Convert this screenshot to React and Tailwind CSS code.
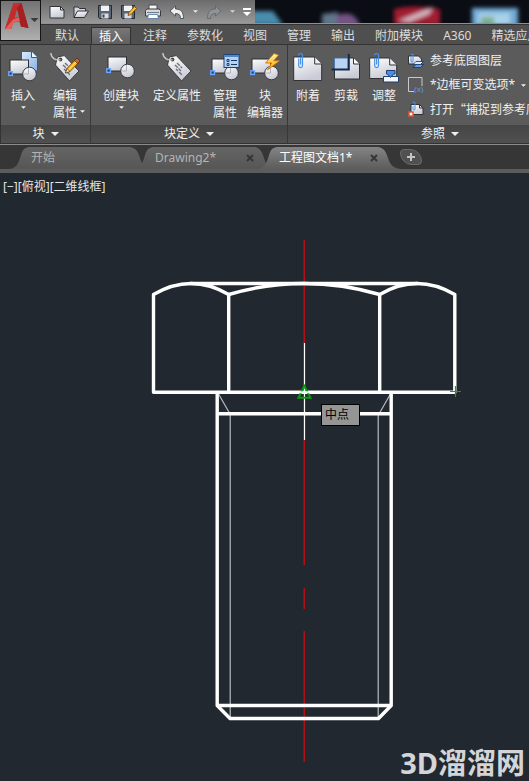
import clsx from "clsx"

const RIBBON_TABS = ["默认", "插入", "注释", "参数化", "视图", "管理", "输出", "附加模块", "A360", "精选应用"]

function Caret({ className }) {
  return (
    <svg viewBox="0 0 8 4" className={clsx("shrink-0 fill-current", className)} aria-hidden="true">
      <path d="M0 0h8L4 4z" />
    </svg>
  )
}

/* gradients shared by all the icons */
function IconDefs() {
  return (
    <svg className="absolute h-0 w-0" aria-hidden="true">
      <defs>
        <linearGradient id="paper" x1="0" y1="0" x2="0.4" y2="1">
          <stop offset="0" stopColor="#ffffff" />
          <stop offset="1" stopColor="#c9ccd6" />
        </linearGradient>
        <linearGradient id="sky" x1="0" y1="0" x2="1" y2="1">
          <stop offset="0" stopColor="#dcecff" />
          <stop offset="1" stopColor="#86b0e4" />
        </linearGradient>
        <linearGradient id="bolt" x1="0" y1="0" x2="0" y2="1">
          <stop offset="0" stopColor="#fff6a0" />
          <stop offset="1" stopColor="#ff9d00" />
        </linearGradient>
        <linearGradient id="red" x1="0" y1="0" x2="1" y2="1">
          <stop offset="0" stopColor="#d93836" />
          <stop offset="1" stopColor="#93171a" />
        </linearGradient>
      </defs>
    </svg>
  )
}

function Icon({ children }) {
  return (
    <svg viewBox="0 0 30 32" className="h-8 w-[30px]" fill="none" aria-hidden="true">
      {children}
    </svg>
  )
}

function BlockShape({ y = 0 }) {
  return (
    <g transform={`translate(0 ${y})`}>
      <rect x="2" y="8" width="18.500" height="14" fill="url(#paper)" stroke="#2b2e34" />
      <circle cx="21.500" cy="22" r="6.800" fill="url(#paper)" stroke="#3a3d44" />
      <path d="M16 22h4.500v-6" stroke="#a3a6ae" strokeWidth="0.800" />
      <rect x="0.800" y="19.800" width="3.600" height="3.600" fill="#20407a" stroke="#6ea8ff" strokeWidth="1.400" />
    </g>
  )
}

function InsertIcon() {
  return (
    <Icon>
      <path d="M13.500 0.500h10l6 6V20h-16z" fill="url(#sky)" stroke="#315a92" />
      <path d="M23.500 0.500v6h6" fill="#f1f7ff" stroke="#315a92" />
      <BlockShape y={1} />
    </Icon>
  )
}

function TagBody() {
  return (
    <>
      <path d="M5.500 14 7.300 6l7-1.400L29 20l-9.500 10z" fill="url(#paper)" stroke="#3a3a3a" />
      <path d="M13 14l6 6M15 12l5 5M17 21l3 3M14 18l2 2" stroke="#6d7078" strokeWidth="1.300" strokeDasharray="4 1" />
      <circle cx="10.400" cy="8.600" r="2" fill="#4b4b4b" />
      <path d="M0.800 2C1.500 8 6 9.500 10.400 8.600" stroke="#c9c9c9" strokeWidth="1.400" />
    </>
  )
}

function EditTagIcon() {
  return (
    <Icon>
      <TagBody />
      <path d="M15.500 22 17 17.500 25.500 8.500l3.200 3-8.700 9z" fill="#ffb319" stroke="#5a3a00" strokeWidth="0.800" />
      <path d="M18.500 19 27 10" stroke="#fff0a5" />
      <path d="M24.500 9.500 27 7l3 3-2.400 2.500z" fill="#c86a2d" stroke="#5a2a10" strokeWidth="0.800" />
      <path d="M15.500 22 17 17.500l3 3z" fill="#f5dfb5" stroke="#333" strokeWidth="0.600" />
    </Icon>
  )
}

function TagIcon() {
  return <Icon><TagBody /></Icon>
}

function CreateIcon() {
  return <Icon><BlockShape y={-2} /></Icon>
}

function ManageIcon() {
  return (
    <Icon>
      <BlockShape />
      <rect x="14" y="3.500" width="15" height="13" fill="#b6d2f3" stroke="#1f4373" />
      <path d="M14 5h15" stroke="#4f86c9" strokeWidth="2" />
      <path d="M17 8.500h2v2h-2zM17 12.500h2v2h-2z" stroke="#17365f" strokeWidth="0.900" />
      <path d="M21 9.500h6M21 13.500h6" stroke="#17365f" strokeWidth="1.200" />
    </Icon>
  )
}

function EditorIcon() {
  return (
    <Icon>
      <BlockShape />
      <path d="M24 2.500 15.500 12h6L17.500 19 29.500 9.800h-5.800L28.500 4z" fill="url(#bolt)" stroke="#d87400" strokeWidth="0.900" />
    </Icon>
  )
}

function Sheet() {
  return (
    <>
      <path d="M0.700 6h21l7 7v16.500h-28z" fill="url(#paper)" stroke="#303236" />
      <path d="M21.700 6v7h7" fill="#eceef2" stroke="#303236" />
    </>
  )
}

function ClipMark() {
  return (
    <path
      d="M5.700 7.500v7.300c0 2.400 3.800 2.400 3.800 0V4.300c0-2.400-4-2.400-4 0M7.600 13.500V7"
      stroke="#4a90e6"
      strokeWidth="1.200"
    />
  )
}

function AttachIcon() {
  return <Icon><Sheet /><ClipMark /></Icon>
}

function CropIcon() {
  return (
    <Icon>
      <path d="M3.500 7h19l6 6v15h-25z" fill="url(#paper)" stroke="#303236" />
      <path d="M22.500 7v6h6" fill="#fff" stroke="#303236" />
      <path d="M3.500 7H17v11.500H3.500z" fill="#b9d3f2" stroke="#4c78ae" />
      <path d="M0.500 18.500h17.300V3" stroke="#15294b" strokeWidth="2" />
    </Icon>
  )
}

function AdjustIcon() {
  return (
    <Icon>
      <path d="M0.700 7h20l7 7v13.500h-27z" fill="url(#paper)" stroke="#303236" />
      <path d="M20.700 7v7h7" fill="#eceef2" stroke="#303236" />
      <ClipMark />
      <path d="M14.500 25.500h15v5.500h-15z" fill="#f5f8fd" stroke="#1f3f70" />
      <path d="M17.500 19.500h8.500v3.500h-1.500l-3 3.500-3-3.500h-1z" fill="#4b8fe8" stroke="#1f3f70" />
    </Icon>
  )
}

function RibbonButton({ icon, lines, caret, sideCaret, className }) {
  return (
    <button type="button" className={clsx("flex flex-col items-center whitespace-nowrap", className)}>
      {icon}
      <span className="relative mt-1 leading-[17px]">
        {lines.map((line) => (
          <span key={line} className="block">{line}</span>
        ))}
        {sideCaret && <Caret className="absolute -right-2 bottom-2 h-[3px] w-[5px]" />}
      </span>
      {caret && <Caret className="mt-0.5 h-[3px] w-[5px]" />}
    </button>
  )
}

function Panel({ title, className, children }) {
  return (
    <section className={clsx("flex min-w-0 flex-col border-r border-[#383838] bg-[#5b5b5b]", className)}>
      <div className="flex h-20 pt-1.5">{children}</div>
      <button
        type="button"
        className="flex h-[18px] items-center justify-center gap-1.5 bg-linear-to-b from-[#454545] to-[#505050] leading-4"
      >
        {title}
        <Caret className="h-1 w-2" />
      </button>
    </section>
  )
}

function RefRow({ icon, text, caret, className }) {
  return (
    <button type="button" className={clsx("flex h-6 items-center gap-1.5 whitespace-nowrap", className)}>
      <svg viewBox="0 0 16 16" className="h-4 w-4 shrink-0" fill="none" aria-hidden="true">{icon}</svg>
      {text}
      {caret && <Caret className="h-[3px] w-[5px]" />}
    </button>
  )
}

const layerIcon = (
  <>
    <path d="M0.500 3h10l3 3v5h-13z" fill="url(#paper)" stroke="#303236" />
    <path d="M3 4v4c0 1.500 2 1.500 2 0V2c0-1.500-2-1.500-2 0" stroke="#4a90e6" />
    <path d="M5 14.500l3-3h7.500l-3 3z" fill="#5f9cec" stroke="#16335f" strokeWidth="0.800" />
    <path d="M5 11.500l3-3h7.500l-3 3z" fill="#dcebff" stroke="#16335f" strokeWidth="0.800" />
  </>
)

const frameIcon = (
  <>
    <path d="M6 14.500H0.500V0.500h13.500V9" stroke="#c8cacd" />
    <text x="6" y="15" fontSize="8" fill="#5b9cf5" fontFamily="Liberation Sans">(x)</text>
  </>
)

const snapIcon = (
  <>
    <path d="M3 3.500h8.500l3.500 3.500v6.500H3z" fill="url(#paper)" stroke="#303236" />
    <path d="M11.500 3.500V7H15" stroke="#303236" />
    <path d="M5 5v3c0 1.500 2 1.500 2 0V2c0-1.500-2-1.500-2 0" stroke="#4a90e6" />
    <rect x="1" y="11" width="4" height="4" fill="#fff" stroke="#e4572e" strokeWidth="1.500" />
  </>
)

function QuickIcon({ label, children }) {
  return (
    <button type="button" aria-label={label} className="shrink-0">
      <svg viewBox="0 0 16 16" className="h-4 w-4" fill="none" aria-hidden="true">{children}</svg>
    </button>
  )
}

function QuickAccess() {
  return (
    <div className="flex w-[214px] shrink-0 items-center gap-2 bg-linear-to-b from-[#6c6c6c] to-[#989898] pl-2 text-gray-200">
      <QuickIcon label="新建">
        <path d="M1 2.500h10.500l3.500 3.500v8H1z" fill="url(#paper)" stroke="#303236" />
        <path d="M11.500 2.500V6H15" stroke="#303236" />
      </QuickIcon>
      <QuickIcon label="打开">
        <path d="M1 13.500V3h4l1.500 1.500h6V7" fill="#d5d8dd" stroke="#303236" />
        <path d="M1 13.500 4.500 7H15.500l-4 6.500z" fill="url(#paper)" stroke="#303236" />
      </QuickIcon>
      <QuickIcon label="保存">
        <path d="M1.500 1.500h13v13h-12l-1-1z" fill="#5b6674" stroke="#252a31" />
        <path d="M4 1.500h8V7H4z" fill="#f2f3f5" />
        <path d="M4.500 9.500h7v5h-7z" fill="#d9dce0" />
        <path d="M5.500 10.500h2v3h-2z" fill="#39424e" />
      </QuickIcon>
      <QuickIcon label="另存为">
        <path d="M0.500 1.500h13v13h-12l-1-1z" fill="#5b6674" stroke="#252a31" />
        <path d="M3 1.500h8V7H3z" fill="#f2f3f5" />
        <path d="M3.500 9.500h7v5h-7z" fill="#d9dce0" />
        <path d="M7 11.500 8 8.500 13.500 2.500 15.500 4.500 10 10.500z" fill="#ffbf35" stroke="#6b4309" strokeWidth="0.800" />
      </QuickIcon>
      <QuickIcon label="打印">
        <path d="M4 1h8v5H4z" fill="#f5f6f8" stroke="#4a4d52" />
        <path d="M0.500 6.500 2 5h12l1.500 1.500v5.500h-15z" fill="#d4d7dc" stroke="#3a3d42" />
        <path d="M2 8.500h12" stroke="#777b82" />
        <path d="M3.500 10.500h9l1 4h-11z" fill="#fff" stroke="#4d76a8" strokeWidth="0.800" />
      </QuickIcon>
      <QuickIcon label="放弃">
        <path d="M1 7 6.500 2v3C12 5 14.500 8 14.500 14.500h-3C11.500 11 10 9.500 6.500 9.500V12z" fill="#eceef2" stroke="#3d4147" strokeWidth="0.800" />
      </QuickIcon>
      <Caret className="-mx-1 box-content h-[3px] w-[5px] px-1" />
      <QuickIcon label="重做">
        <path d="M15 7 9.500 2v3C4 5 1.500 8 1.500 14.500h3C4.500 11 6 9.500 9.500 9.500V12z" fill="#8f9296" stroke="#5f6266" strokeWidth="0.800" />
      </QuickIcon>
      <Caret className="-mx-1 box-content h-[3px] w-[5px] px-1 text-gray-300" />
      <button type="button" aria-label="自定义快速访问工具栏" className="flex flex-col items-center gap-0.5">
        <span className="h-0.5 w-2 bg-white" />
        <Caret className="h-1 w-2 text-white" />
      </button>
    </div>
  )
}

function DesktopStrip() {
  return (
    <svg viewBox="0 0 274 23" preserveAspectRatio="xMinYMin slice" className="h-[23px] min-w-0 flex-1 bg-[#0a0d13]" aria-hidden="true">
      <defs>
        <filter id="soft" x="-20%" y="-20%" width="140%" height="140%">
          <feGaussianBlur stdDeviation="2" />
        </filter>
      </defs>
      <g filter="url(#soft)">
        <path d="M-4 11h22l10 14H-4z" fill="#4a8cae" />
        <path d="M67 14l16-2v14H67z" fill="#60748a" />
        <path d="M82 15q18-6 23 11H82z" fill="#745385" />
        <path d="M139 9q20-5 46 0v16h-46z" fill="#a31c30" />
        <path d="M143 21 178 7l-4 7-20 8z" fill="#d8bcc9" />
        <path d="M217 8h46v18h-46z" fill="#73abd8" />
        <path d="M223 13h32v12h-32z" fill="#a9d2e8" />
        <path d="M226 17h13v8h-13z" fill="#7fae93" />
      </g>
    </svg>
  )
}

function Header() {
  return (
    <header className="flex bg-[#4f4f4f]">
      <button
        type="button"
        aria-label="应用程序菜单"
        className="z-10 flex h-[41px] w-[41px] shrink-0 items-center border border-[#151515] bg-linear-to-b from-[#737373] to-[#b0b0b0]"
      >
        <svg viewBox="0 0 39 39" className="h-[39px] w-[39px]" aria-hidden="true">
          <path d="M12.500 2h8l7 25-7.500-1.500-1.500-5-6.500 1L10 28H4z" fill="url(#red)" />
          <path d="M16 8l2.500 7.500-5 1.500z" fill="#7c7c7c" />
          <path d="M12.500 2 16 7 10 28H4z" fill="#c42c2c" />
          <path d="M4 28 12 18.500 18 16 19.500 20 12.500 21.500 10 28z" fill="#e2605b" />
          <path d="M20.500 2l7 25-7.500-1.500L16 7z" fill="#a52023" />
          <path d="M29.500 17h8L33.500 21z" fill="#343a42" />
        </svg>
      </button>
      <div className="flex min-w-0 flex-1 flex-col">
        <div className="flex h-6 border-b border-[#909090]">
          <QuickAccess />
          <DesktopStrip />
        </div>
        <nav className="flex h-5 gap-1 overflow-hidden border-t border-[#333] pl-1.5 pt-0.5 text-[#dcdcdc]">
          {RIBBON_TABS.map((tab) => (
            <button
              key={tab}
              type="button"
              className={clsx(
                "h-[18px] shrink-0 px-2 leading-4",
                tab === "插入" && "border border-b-0 border-[#303030] bg-linear-to-b from-[#777] to-[#5e5e5e] px-[7px] text-white"
              )}
            >
              {tab}
            </button>
          ))}
        </nav>
      </div>
    </header>
  )
}

function Ribbon() {
  return (
    <div className="flex overflow-hidden border-y border-l border-[#333] text-[#f0f0f0]">
      <Panel title="块" className="w-[90px] shrink-0">
        <RibbonButton className="ml-1 w-9" icon={<InsertIcon />} lines={["插入"]} caret />
        <RibbonButton className="ml-1 w-10" icon={<EditTagIcon />} lines={["编辑", "属性"]} sideCaret />
      </Panel>
      <Panel title="块定义" className="w-[197px] shrink-0">
        <RibbonButton className="ml-1 w-[52px]" icon={<CreateIcon />} lines={["创建块"]} caret />
        <RibbonButton className="ml-1 w-[52px]" icon={<TagIcon />} lines={["定义属性"]} />
        <RibbonButton className="ml-1 w-9" icon={<ManageIcon />} lines={["管理", "属性"]} />
        <RibbonButton className="ml-1 w-9" icon={<EditorIcon />} lines={["块", "编辑器"]} />
      </Panel>
      <Panel title="参照" className="min-w-[305px] flex-1">
        <div className="flex gap-0.5 pl-0.5">
          <RibbonButton className="w-9" icon={<AttachIcon />} lines={["附着"]} />
          <RibbonButton className="w-9" icon={<CropIcon />} lines={["剪裁"]} />
          <RibbonButton className="w-9" icon={<AdjustIcon />} lines={["调整"]} />
        </div>
        <div className="-mt-0.5 flex flex-col pl-1.5">
          <RefRow icon={layerIcon} text="参考底图图层" />
          <RefRow icon={frameIcon} text="*边框可变选项*" caret />
          <RefRow
            icon={snapIcon}
            text="打开“捕捉到参考底图”选项"
            className="[font-family:'Noto_Sans_CJK_SC',sans-serif]"
          />
        </div>
      </Panel>
    </div>
  )
}

function CloseMark() {
  return (
    <button type="button" aria-label="关闭" className="text-[#363636]">
      <svg viewBox="0 0 8 8" className="h-2 w-2" aria-hidden="true">
        <path d="M1 1l6 6M7 1L1 7" stroke="currentColor" strokeWidth="2" />
      </svg>
    </button>
  )
}

function FileTab({ name, active, closable, className }) {
  return (
    <div
      className={clsx(
        "flex h-[22px] w-[146px] shrink-0 items-center justify-between pl-[23px] pr-6",
        "[clip-path:path('M0_22C9_22_11_15_13_8C15_2_17_0_23_0H121C128_0_130_5_132_11C134_18_138_22_146_22Z')]",
        active
          ? "z-10 bg-linear-to-b from-[#858585] to-[#5c5c5c] text-white"
          : "bg-linear-to-b from-[#656565] to-[#565656] text-[#b4b4b4]",
        className
      )}
    >
      <a href="#" className="whitespace-nowrap">{name}</a>
      {closable && <CloseMark />}
    </div>
  )
}

function FileTabs() {
  return (
    <div className="flex h-[29px] items-end overflow-hidden border-b-4 border-t border-b-[#5c5c5c] border-t-[#8c8c8c] bg-[#363636] pl-2">
      <FileTab name="开始" />
      <FileTab name="Drawing2*" closable className="-ml-[22px]" />
      <FileTab name="工程图文档1*" active closable className="-ml-[22px]" />
      <button
        type="button"
        aria-label="新图形"
        className="-ml-0.5 mb-1 flex h-4 w-[22px] shrink-0 items-center justify-center rounded-bl-xl rounded-br-sm rounded-tl-sm rounded-tr-xl border border-[#6a6a6a] bg-[#505050]"
      >
        <svg viewBox="0 0 8 8" className="h-2 w-2" aria-hidden="true">
          <path d="M4 0v8M0 4h8" stroke="#c4c4c4" strokeWidth="2" />
        </svg>
      </button>
    </div>
  )
}

/* hex bolt, front view */
function BoltDrawing() {
  return (
    <svg viewBox="144 231 320 536" className="ml-36 mt-9 block h-[536px] w-80" fill="none" role="img" aria-label="螺栓">
      <g stroke="#b01014" strokeWidth="1.600">
        <path d="M304.300 240V565M304.300 588V609M304.300 631V762" />
      </g>
      <g stroke="#b9bcbf" strokeWidth="1.200">
        <path d="M230.200 414V718M378.200 414V718M218 393l12 21M391 393l-12 21" />
      </g>
      <g stroke="#fff" strokeWidth="3.400" strokeLinejoin="round">
        <path d="M153.500 392.300V294.500Q191 272.500 228.700 294.500Q304 272.500 379.700 294.500Q417 272.500 454.800 294.500V392.300Z" />
        <path d="M190 283.500H418M228.700 294V392M379.700 294V392" />
        <path d="M217.200 392V705.500L230 718.500H378.500L391.200 705.500V392" />
        <path d="M217 413.800H391M217 705.500H391" />
      </g>
      <path d="M304.500 343V440" stroke="#fff" strokeWidth="1.200" />
      <path d="M304.300 386 298.500 397.800H310.500Z" stroke="#0b9a12" strokeWidth="2" />
      <path d="M300 392.300h9" stroke="#e8fbe8" strokeWidth="2" />
      <path d="M455.500 386v11M450 391.500h11" stroke="#12a01a" strokeWidth="1.200" />
    </svg>
  )
}

export default function App() {
  return (
    <div className="flex min-h-screen flex-col overflow-hidden bg-[#222830] text-[12px] leading-4 [font-family:'Noto_Sans','Noto_Sans_CJK_SC',sans-serif]">
      <IconDefs />
      <Header />
      <Ribbon />
      <FileTabs />
      <main className="relative flex-1 pt-1.5">
        <p className="pl-[3px] text-[#e4e6e8]">[−][俯视][二维线框]</p>
        <BoltDrawing />
        <div className="absolute left-[321px] top-[231px] border border-black bg-[#959595] py-0.5 pl-[3px] pr-2.5 text-black">
          中点
        </div>
        <div className="absolute bottom-0 right-1 text-[29px] font-bold leading-9 text-[#d3d5d7]">
          3D溜溜网
        </div>
      </main>
    </div>
  )
}
